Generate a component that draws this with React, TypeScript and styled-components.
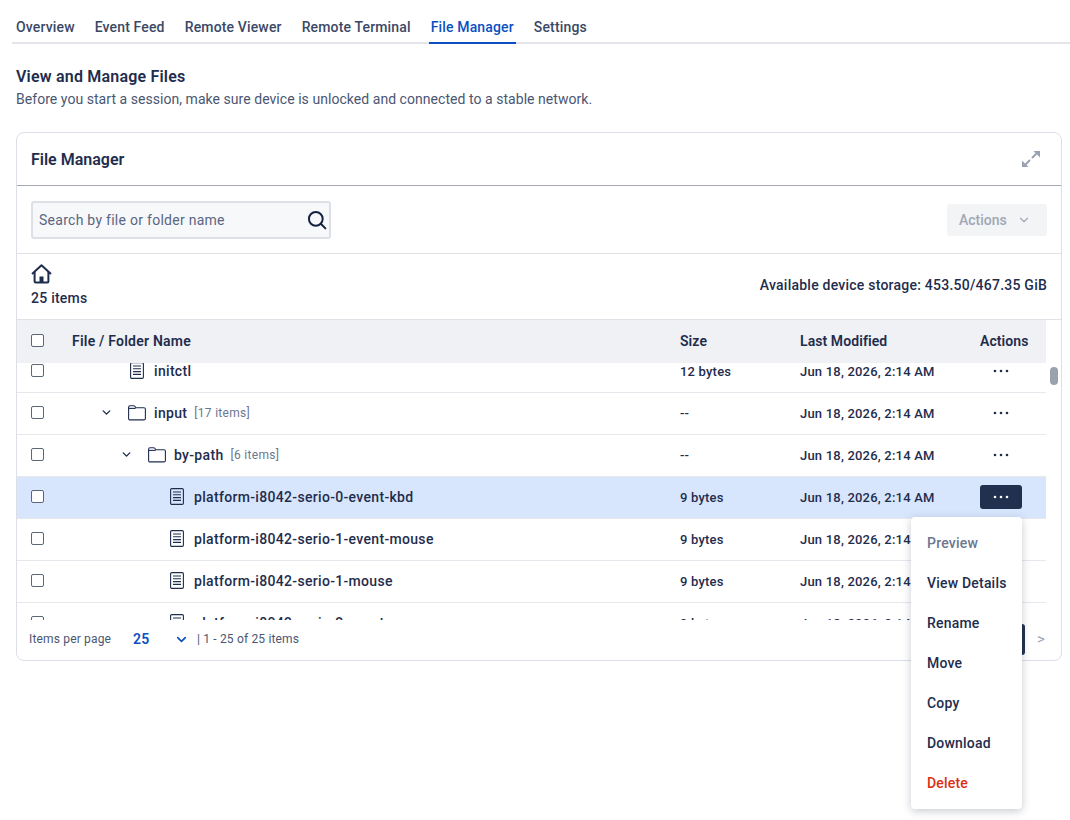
import React from 'react';
import styled, { createGlobalStyle } from 'styled-components';
import { ChevronDown } from 'lucide-react';

const GlobalStyle = createGlobalStyle`
  * {
    box-sizing: border-box;
  }
  body {
    margin: 0;
    background: #fff;
    color: #1f2d4d;
    font-family: 'Roboto', 'Liberation Sans', sans-serif;
    font-size: 14px;
  }
`;

type RowData = {
  name: string;
  level: number;
  kind: 'file' | 'folder';
  count?: string;
  size: string;
  selected?: boolean;
};

const tabs = ['Overview', 'Event Feed', 'Remote Viewer', 'Remote Terminal', 'File Manager', 'Settings'];
const menuItems = ['Preview', 'View Details', 'Rename', 'Move', 'Copy', 'Download', 'Delete'];

const rows: RowData[] = [
  { name: 'initctl', level: 1, kind: 'file', size: '12 bytes' },
  { name: 'input', level: 1, kind: 'folder', count: '[17 items]', size: '--' },
  { name: 'by-path', level: 2, kind: 'folder', count: '[6 items]', size: '--' },
  { name: 'platform-i8042-serio-0-event-kbd', level: 3, kind: 'file', size: '9 bytes', selected: true },
  { name: 'platform-i8042-serio-1-event-mouse', level: 3, kind: 'file', size: '9 bytes' },
  { name: 'platform-i8042-serio-1-mouse', level: 3, kind: 'file', size: '9 bytes' },
  { name: 'platform-i8042-serio-2-event', level: 3, kind: 'file', size: '9 bytes' },
];

function FileIcon() {
  return (
    <svg width="14" height="17" viewBox="0 0 14 17" fill="none" stroke="#1f2d4d" strokeWidth="1.1">
      <rect x="0.6" y="0.6" width="12.8" height="15.8" rx="1.2" />
      <path d="M3 4h8M3 6.8h8M3 9.6h8M3 12.4h8" />
    </svg>
  );
}

function FolderIcon() {
  return (
    <svg width="18" height="16" viewBox="0 0 18 16" fill="none" stroke="#1f2d4d" strokeWidth="1.1">
      <path d="M0.6 2.2c0-.9.6-1.5 1.4-1.5h3.6c.7 0 1 .3 1.4.8l.8 1.2h8.2c.8 0 1.4.6 1.4 1.4v9.4c0 .8-.6 1.4-1.4 1.4H2c-.8 0-1.4-.6-1.4-1.4z" />
      <path d="M0.6 3.4h7" />
    </svg>
  );
}

function HomeIcon() {
  return (
    <svg width="21" height="20" viewBox="0 0 21 20" fill="none" stroke="#1f2d4d" strokeWidth="2" strokeLinejoin="round">
      <path d="M1 10L10.5 1.2 20 10" />
      <path d="M3.6 8v9.4c0 .7.4 1.1 1.1 1.1h11.6c.7 0 1.1-.4 1.1-1.1V8" />
      <rect x="8.5" y="12.5" width="4" height="6.5" fill="#1f2d4d" stroke="none" />
    </svg>
  );
}

function SearchIcon() {
  return (
    <svg width="20" height="20" viewBox="0 0 20 20" fill="none" stroke="#14223f" strokeWidth="2" strokeLinecap="round">
      <circle cx="8.8" cy="8.8" r="6.9" />
      <path d="M13.8 13.8L18.4 18.4" />
    </svg>
  );
}

function ExpandIcon() {
  return (
    <svg width="20" height="20" viewBox="0 0 20 20" fill="#9aa2b0" stroke="#9aa2b0" strokeWidth="2">
      <path d="M11 9L15.5 4.5" fill="none" />
      <path d="M12.5 2h6.5v6.5z" stroke="none" />
      <path d="M9 11L4.5 15.5" fill="none" />
      <path d="M1 11.5V18h6.5z" stroke="none" />
    </svg>
  );
}

function Dots({ light }: { light?: boolean }) {
  return (
    <svg width="16" height="4" viewBox="0 0 16 4" fill={light ? '#fff' : '#1f2d4d'}>
      <circle cx="2" cy="2" r="1.3" />
      <circle cx="8" cy="2" r="1.3" />
      <circle cx="14" cy="2" r="1.3" />
    </svg>
  );
}

export default function App() {
  return (
    <>
      <GlobalStyle />
      <Page>
        <Tabs>
          {tabs.map((tab) => (
            <Tab key={tab} $active={tab === 'File Manager'}>
              {tab}
            </Tab>
          ))}
        </Tabs>
        <Heading>
          <Title>View and Manage Files</Title>
          <Subtitle>Before you start a session, make sure device is unlocked and connected to a stable network.</Subtitle>
        </Heading>
        <Card>
          <CardHeader>
            <CardTitle>File Manager</CardTitle>
            <ExpandIcon />
          </CardHeader>
          <Toolbar>
            <SearchBox>
              <SearchInput placeholder="Search by file or folder name" readOnly />
              <SearchIcon />
            </SearchBox>
            <ActionsButton>
              Actions
              <ChevronDown size={14} strokeWidth={2} />
            </ActionsButton>
          </Toolbar>
          <InfoRow>
            <div>
              <HomeIcon />
              <ItemCount>25 items</ItemCount>
            </div>
            <Storage>Available device storage: 453.50/467.35 GiB</Storage>
          </InfoRow>
          <TableArea>
            <TableColumn>
              <HeadRow>
                <CheckCell>
                  <Checkbox />
                </CheckCell>
                <NameHead>File / Folder Name</NameHead>
                <span>Size</span>
                <span>Last Modified</span>
                <span>Actions</span>
              </HeadRow>
              <TableBody>
                <ScrollContent>
                  {rows.map((row) => (
                    <Row key={row.name} $selected={row.selected}>
                      <CheckCell>
                        <Checkbox />
                      </CheckCell>
                      <NameCell $level={row.level}>
                        <ChevronSlot>
                          {row.kind === 'folder' && <ChevronDown size={13} strokeWidth={2.6} color="#1f2d4d" />}
                        </ChevronSlot>
                        <IconSlot>{row.kind === 'folder' ? <FolderIcon /> : <FileIcon />}</IconSlot>
                        <FileName>{row.name}</FileName>
                        {row.count && <FileCount>{row.count}</FileCount>}
                      </NameCell>
                      <DataCell>{row.size}</DataCell>
                      <DataCell>Jun 18, 2026, 2:14 AM</DataCell>
                      <MoreButton $active={row.selected}>
                        <Dots light={row.selected} />
                      </MoreButton>
                    </Row>
                  ))}
                </ScrollContent>
              </TableBody>
            </TableColumn>
            <ScrollTrack>
              <ScrollThumb />
            </ScrollTrack>
          </TableArea>
          <Footer>
            <PerPageLabel>Items per page</PerPageLabel>
            <PerPageValue>25</PerPageValue>
            <ChevronDown size={15} strokeWidth={2.6} color="#0b4fc2" />
            <RangeLabel>| 1 - 25 of 25 items</RangeLabel>
            <PageButton />
            <NextPage>&gt;</NextPage>
          </Footer>
          <Menu>
            {menuItems.map((item) => (
              <MenuItem key={item} $tone={item === 'Preview' ? 'muted' : item === 'Delete' ? 'danger' : 'normal'}>
                {item}
              </MenuItem>
            ))}
          </Menu>
        </Card>
      </Page>
    </>
  );
}

const Page = styled.div`
  width: 1070px;
  height: 820px;
  padding: 12px 8px 0 16px;
  overflow: hidden;
`;

const Tabs = styled.div`
  display: flex;
  gap: 16px;
  height: 32px;
  margin: 0 -8px 0 -4px;
  padding-left: 2px;
  border-bottom: 2px solid #e4e6ec;
`;

const Tab = styled.div<{ $active?: boolean }>`
  height: 32px;
  padding: 6px 2px 0;
  font-size: 14px;
  font-weight: 500;
  line-height: 18px;
  letter-spacing: 0.15px;
  color: ${(props) => (props.$active ? '#0b4fc2' : '#3a4866')};
  border-bottom: 2px solid ${(props) => (props.$active ? '#0b4fc2' : 'transparent')};
`;

const Heading = styled.div`
  padding-top: 23px;
`;

const Title = styled.h2`
  margin: 0;
  font-size: 16px;
  font-weight: 600;
  line-height: 20px;
  letter-spacing: 0.2px;
  color: #1f2d4d;
`;

const Subtitle = styled.p`
  margin: 3px 0 0;
  font-size: 14px;
  line-height: 18px;
  letter-spacing: 0.045px;
  color: #4a5672;
`;

const Card = styled.div`
  position: relative;
  width: 1046px;
  height: 529px;
  margin-top: 24px;
  border: 1px solid #dcdfe6;
  border-radius: 8px;
  background: #fff;
  display: flex;
  flex-direction: column;
`;

const CardHeader = styled.div`
  height: 53px;
  flex: none;
  padding: 0 20px 0 14px;
  display: flex;
  align-items: center;
  justify-content: space-between;
  border-bottom: 1px solid #a3a8b3;
`;

const CardTitle = styled.h3`
  margin: 0;
  font-size: 16px;
  font-weight: 600;
  color: #1f2d4d;
`;

const Toolbar = styled.div`
  height: 68px;
  flex: none;
  padding: 0 14px;
  display: flex;
  align-items: center;
  justify-content: space-between;
  border-bottom: 1px solid #dfe1e7;
`;

const SearchBox = styled.div`
  width: 300px;
  height: 38px;
  padding: 0 2px 0 4px;
  display: flex;
  align-items: center;
  background: #f7f8fa;
  border: 2px solid #dcdfe6;
  border-radius: 3px;
`;

const SearchInput = styled.input`
  flex: 1;
  min-width: 0;
  border: 0;
  outline: 0;
  background: transparent;
  font-family: inherit;
  font-size: 14px;
  letter-spacing: 0.27px;
  color: #4a5672;
  &::placeholder {
    color: #5a6682;
    opacity: 1;
  }
`;

const ActionsButton = styled.div`
  width: 100px;
  height: 32px;
  padding: 0 12px;
  display: flex;
  align-items: center;
  gap: 10px;
  font-size: 14px;
  font-weight: 500;
  color: #a0a7b5;
  background: #f3f4f6;
  border-radius: 3px;
`;

const InfoRow = styled.div`
  height: 66px;
  flex: none;
  padding: 10px 14px 0;
  display: flex;
  align-items: flex-start;
  justify-content: space-between;
  border-bottom: 1px solid #dfe1e7;
`;

const ItemCount = styled.div`
  margin-top: 2px;
  font-size: 14px;
  font-weight: 500;
  line-height: 18px;
  letter-spacing: 0.25px;
`;

const Storage = styled.div`
  margin-top: 12px;
  font-size: 14px;
  font-weight: 500;
  line-height: 18px;
  letter-spacing: 0.23px;
`;

const TableArea = styled.div`
  height: 300px;
  flex: none;
  display: flex;
`;

const TableColumn = styled.div`
  width: 1029px;
  display: flex;
  flex-direction: column;
`;

const HeadRow = styled.div`
  height: 43px;
  flex: none;
  padding-bottom: 2px;
  display: grid;
  grid-template-columns: 55px 608px 120px 180px 66px;
  align-items: center;
  background: #f0f1f5;
  font-size: 14px;
  font-weight: 600;
  letter-spacing: 0.08px;
`;

const NameHead = styled.span`
  letter-spacing: 0.22px;
`;

const TableBody = styled.div`
  flex: 1;
  min-height: 0;
  overflow: hidden;
`;

const ScrollContent = styled.div`
  margin-top: -12px;
`;

const Row = styled.div<{ $selected?: boolean }>`
  height: 42px;
  padding-bottom: 2px;
  display: grid;
  grid-template-columns: 55px 608px 120px 180px 66px;
  align-items: center;
  background: ${(props) => (props.$selected ? '#d8e6fd' : '#fff')};
  border-bottom: 1px solid #e6e8ed;
`;

const CheckCell = styled.div`
  padding-left: 14px;
  display: flex;
  align-items: center;
`;

const Checkbox = styled.div`
  width: 13px;
  height: 13px;
  background: #fff;
  border: 1px solid #5c6678;
  border-radius: 2px;
`;

const NameCell = styled.div<{ $level: number }>`
  display: flex;
  align-items: center;
  padding-left: ${(props) => props.$level * 20 + 2}px;
`;

const ChevronSlot = styled.div`
  width: 24px;
  flex: none;
  display: flex;
  justify-content: center;
`;

const IconSlot = styled.div`
  width: 22px;
  margin: 0 6px 0 8px;
  flex: none;
  display: flex;
  justify-content: center;
`;

const FileName = styled.span`
  font-size: 14px;
  font-weight: 500;
  letter-spacing: 0.32px;
`;

const FileCount = styled.span`
  margin-left: 7px;
  font-size: 12px;
  letter-spacing: 0.3px;
  color: #6b7690;
`;

const DataCell = styled.div`
  padding-top: 1px;
  font-size: 13px;
  font-weight: 500;
  letter-spacing: 0.2px;
`;

const MoreButton = styled.div<{ $active?: boolean }>`
  width: 42px;
  height: 24px;
  display: flex;
  align-items: center;
  justify-content: center;
  border-radius: 3px;
  background: ${(props) => (props.$active ? '#21304f' : 'transparent')};
`;

const ScrollTrack = styled.div`
  flex: 1;
  padding: 47px 0 0 4px;
`;

const ScrollThumb = styled.div`
  width: 8px;
  height: 18px;
  border-radius: 4px;
  background: #9aa2b0;
`;

const Footer = styled.div`
  flex: 1;
  padding: 0 14px 2px 12px;
  display: flex;
  align-items: center;
  font-size: 12px;
  letter-spacing: 0.17px;
  color: #4a5672;
`;

const PerPageLabel = styled.span`
  width: 104px;
`;

const PerPageValue = styled.span`
  width: 41px;
  font-size: 14px;
  font-weight: 600;
  color: #0b4fc2;
`;

const RangeLabel = styled.span`
  margin-left: 8px;
`;

const PageButton = styled.div`
  width: 30px;
  height: 31px;
  margin-left: auto;
  background: #21304f;
  border-radius: 3px;
`;

const NextPage = styled.span`
  margin: 0 2px 0 12px;
  font-size: 15px;
  color: #9aa2b0;
`;

const Menu = styled.div`
  position: absolute;
  top: 384px;
  left: 894px;
  width: 111px;
  height: 292px;
  padding: 6px 0;
  background: #fff;
  border-radius: 4px;
  box-shadow: 0 2px 8px rgba(31, 45, 77, 0.25);
`;

const menuColors = { muted: '#6b7690', danger: '#dc2f12', normal: '#1f2d4d' };

const MenuItem = styled.div<{ $tone: 'muted' | 'danger' | 'normal' }>`
  height: 40px;
  padding-left: 16px;
  display: flex;
  align-items: center;
  font-size: 14px;
  font-weight: 500;
  letter-spacing: 0.2px;
  color: ${(props) => menuColors[props.$tone]};
`;
